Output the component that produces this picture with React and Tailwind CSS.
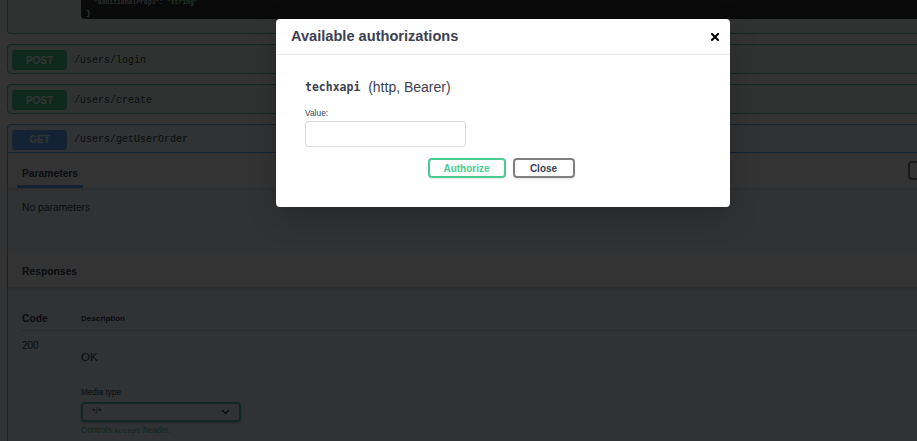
import React from 'react';

const sans = "font-['Liberation_Sans',Arial,sans-serif]";
const mono = "font-['Liberation_Mono','DejaVu_Sans_Mono',monospace]";

function OpSummary({ method, path, last }) {
  const isGet = method === 'GET';
  return (
    <div
      className={
        'flex h-[28px] items-center pl-[4px] pt-[2px] ' +
        (last ? 'border-b border-[#61affe]' : '')
      }
    >
      <div
        className={
          'flex h-[20px] w-[55px] items-center justify-center rounded-[3px] text-[10px] font-bold text-white ' +
          (isGet ? 'bg-[#61affe]' : 'bg-[#49cc90]')
        }
      >
        {method}
      </div>
      <span className={mono + ' ml-[7px] text-[10px] text-[#3b4151]'}>{path}</span>
    </div>
  );
}

function Swagger() {
  return (
    <div className={sans + ' w-[985px] pl-[7px] text-[#3b4151]'}>
      {/* tail of the previous operation */}
      <div className="mb-[10px] h-[36px] rounded-b-[4px] border border-t-0 border-[#49cc90] bg-[#49cc90]/10 pl-[73px]">
        <div className={mono + ' h-[21px] rounded-bl-[4px] bg-[#333] pl-[5px] text-[6.4px] font-bold leading-[10px] text-white'}>
          <div className="-mt-[2px] pl-[8px]">
            <span className="text-[#d2d2d2]">"additionalProp3"</span>: <span className="text-[#a2fca2]">"string"</span>
          </div>
          <div className="text-[8px]">{'}'}</div>
        </div>
      </div>

      <div className="mb-[10px] rounded-[4px] border border-[#49cc90] bg-[#49cc90]/10">
        <OpSummary method="POST" path="/users/login" />
      </div>
      <div className="mb-[10px] rounded-[4px] border border-[#49cc90] bg-[#49cc90]/10">
        <OpSummary method="POST" path="/users/create" />
      </div>

      <div className="rounded-[4px] border border-[#61affe] bg-[#61affe]/10">
        <OpSummary method="GET" path="/users/getUserOrder" last />

        {/* parameters */}
        <div className="flex h-[35px] items-end justify-between bg-white/80 pr-[14px] shadow-[0_1px_2px_rgba(0,0,0,0.1)]">
          <div className="ml-[9px] border-b-[3px] border-[#61affe] px-[5px] pb-[4px] text-[10.3px] font-bold">
            Parameters
          </div>
          {/* "Try it out" button, only its edge is on screen */}
          <div className="mb-[8px] h-[19px] w-[62px] rounded-[4px] border-2 border-[#808080]" />
        </div>
        <div className="h-[65px] px-[14px] pt-[12px] text-[10.3px]">No parameters</div>

        {/* responses */}
        <div className="flex h-[34px] items-center bg-white/80 px-[14px] pt-[4px] text-[10.3px] font-bold shadow-[0_1px_2px_rgba(0,0,0,0.1)]">
          Responses
        </div>
        <div className="px-[14px] pt-[25px]">
          <div className="flex h-[19px] items-center border-b border-[#3b4151]/20 pb-[5px]">
            <div className="w-[59px] text-[10.3px] font-bold">Code</div>
            <div className="text-[8px] font-bold">Description</div>
          </div>
          <div className="flex pt-[7px]">
            <div className="w-[59px] text-[10px]">200</div>
            <div>
              <div className="pt-[11px] text-[11.5px]">OK</div>
              <div className="mt-[21px] text-[8.2px]">Media type</div>
              <div className="mt-[2px] flex h-[20px] w-[160px] items-center justify-between rounded-[4px] border-2 border-[#49cc90] pl-[9px] pr-[9px] shadow-[0_1px_2px_rgba(0,0,0,0.25)]">
                <span className="text-[9px]">*/*</span>
                <svg width="9" height="6" viewBox="0 0 9 6" fill="none" stroke="#3b4151" strokeWidth="1.5">
                  <path d="M1 1l3.5 3.5L8 1" />
                </svg>
              </div>
              <div className="mt-[3px] text-[8.2px] text-[#49cc90]">
                Controls <span className={mono + ' text-[7.5px]'}>Accept</span> header.
              </div>
              <div className="h-[60px]" />
            </div>
          </div>
        </div>
      </div>
    </div>
  );
}

function AuthModal() {
  return (
    <div className={sans + ' absolute left-[276px] top-[19px] w-[454px] rounded-[4px] bg-white text-[#3b4151] shadow-[0_10px_30px_rgba(0,0,0,0.2)]'}>
      <div className="flex h-[36px] items-center justify-between border-b border-[#ebebeb] pl-[15px] pr-[11px] pt-[1px]">
        <h3 className="text-[14.6px] font-bold">Available authorizations</h3>
        <svg width="8" height="8" viewBox="0 0 8 8" stroke="#000" strokeWidth="2" strokeLinecap="square">
          <path d="M1 1l6 6M7 1L1 7" />
        </svg>
      </div>
      <div className="px-[29px] pb-[29px] pt-[24px]">
        <h4 className="flex h-[16px] items-center text-[14px] leading-[16px]">
          <code className={"font-['DejaVu_Sans_Mono',monospace] text-[11.5px] font-semibold"}>techxapi</code>
          <span className="whitespace-pre">{'  (http, Bearer)'}</span>
        </h4>
        <div className="mt-[13px] h-[10px] text-[8.4px] leading-[10px]">Value:</div>
        <input
          type="text"
          className="mt-[3px] block h-[26px] w-[161px] rounded-[3px] border border-[#d9d9d9] outline-none"
        />
        <div className="mt-[11px] flex justify-center gap-[7px] pr-[4px]">
          <button className="h-[20px] w-[78px] rounded-[4px] border-2 border-[#49cc90] text-[10px] font-bold text-[#49cc90] shadow-[0_1px_2px_rgba(0,0,0,0.1)]">
            Authorize
          </button>
          <button className="h-[20px] w-[62px] rounded-[4px] border-2 border-[#808080] text-[10px] font-bold text-[#3b4151] shadow-[0_1px_2px_rgba(0,0,0,0.1)]">
            Close
          </button>
        </div>
      </div>
    </div>
  );
}

export default function App() {
  return (
    <div className="relative h-[441px] w-[917px] overflow-hidden bg-white">
      <Swagger />
      <div className="absolute inset-0 bg-black/80" />
      <AuthModal />
    </div>
  );
}
